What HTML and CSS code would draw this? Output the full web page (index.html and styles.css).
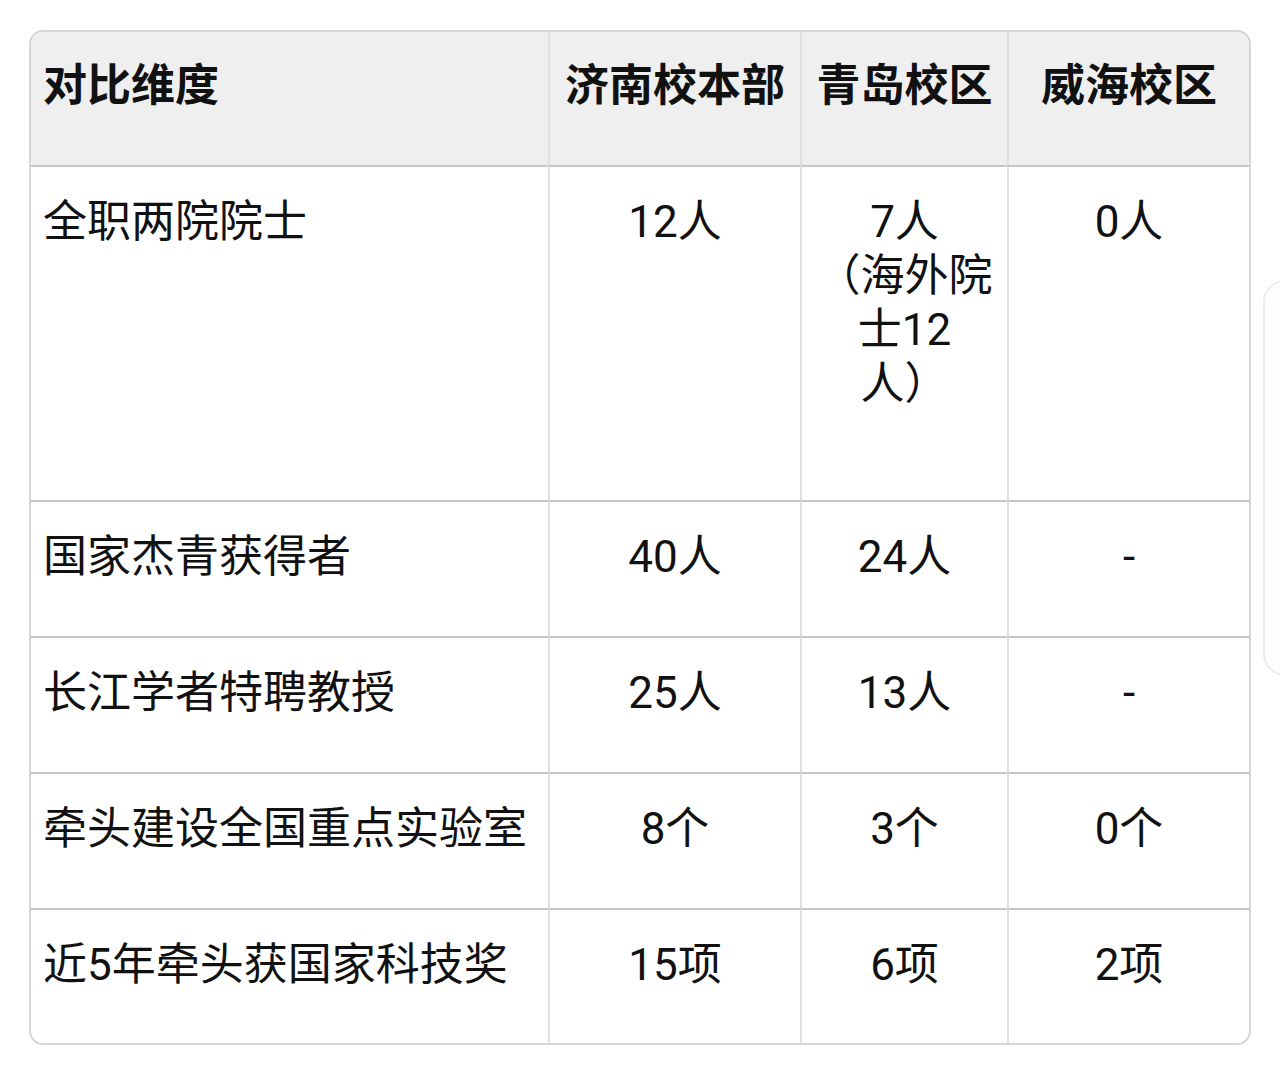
FILE: index.html
```html
<!DOCTYPE html>
<html lang="zh-CN">
<head>
<meta charset="utf-8">
<title>对比</title>
<link rel="stylesheet" href="styles.css">
</head>
<body>
<div class="table-wrap">
  <table class="cmp">
    <colgroup>
      <col class="c1"><col class="c2"><col class="c3"><col class="c4">
    </colgroup>
    <thead>
      <tr class="head">
        <th class="left">对比维度</th>
        <th>济南校本部</th>
        <th>青岛校区</th>
        <th>威海校区</th>
      </tr>
    </thead>
    <tbody>
      <tr class="tall">
        <td class="left">全职两院院士</td>
        <td>12人</td>
        <td class="wrap">7人<br>（海外院<br>士12<br>人）</td>
        <td>0人</td>
      </tr>
      <tr>
        <td class="left">国家杰青获得者</td>
        <td>40人</td>
        <td>24人</td>
        <td>-</td>
      </tr>
      <tr>
        <td class="left">长江学者特聘教授</td>
        <td>25人</td>
        <td>13人</td>
        <td>-</td>
      </tr>
      <tr>
        <td class="left">牵头建设全国重点实验室</td>
        <td>8个</td>
        <td>3个</td>
        <td>0个</td>
      </tr>
      <tr>
        <td class="left">近5年牵头获国家科技奖</td>
        <td>15项</td>
        <td>6项</td>
        <td>2项</td>
      </tr>
    </tbody>
  </table>
</div>
<div class="edge-panel"></div>
</body>
</html>
```

FILE: styles.css
```css
html, body {
  margin: 0;
  padding: 0;
  background: #ffffff;
}
body {
  padding: 30px 29px;
  font-family: Roboto, "Noto Sans CJK SC", sans-serif;
  color: #111111;
  position: relative;
  min-height: 1090px;
  box-sizing: border-box;
  overflow: hidden;
}
.table-wrap {
  width: 1222px;
  box-sizing: border-box;
  border: 2px solid #d6d6d6;
  border-radius: 14px;
  overflow: hidden;
}
.cmp {
  width: 1218px;
  table-layout: fixed;
  border-collapse: separate;
  border-spacing: 0;
  font-size: 44px;
  line-height: 54px;
}
.c1 { width: 517px; }
.c2 { width: 252px; }
.c3 { width: 207px; }
.c4 { width: 242px; }

.cmp th,
.cmp td {
  padding: 0 14px;
  text-align: center;
  vertical-align: top;
  box-sizing: border-box;
}
.cmp th + th,
.cmp td + td {
  border-left: 2px solid #e0e0e0;
}
.cmp .left {
  text-align: left;
  padding-left: 12px;
}
.head th {
  background: #efefef;
  font-weight: 700;
  height: 133px;
  padding-top: 27px;
}
.cmp tbody td {
  border-top: 2px solid #c6c6c6;
  height: 136px;
  padding-top: 28px;
}
.cmp tbody tr.tall td {
  height: 335px;
}
.cmp tbody tr:last-child td {
  height: 135px;
}
.wrap {
  white-space: nowrap;
}
.edge-panel {
  position: absolute;
  left: 1263px;
  top: 280px;
  width: 60px;
  height: 396px;
  border: 2px solid #ececec;
  border-radius: 22px;
  background: #fdfdfd;
  box-sizing: border-box;
}
```
